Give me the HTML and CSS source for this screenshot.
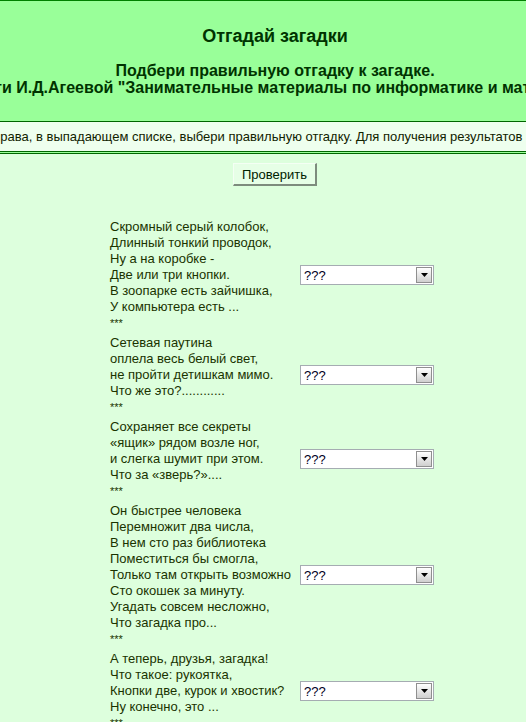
FILE: index.html
```html
<!DOCTYPE html>
<html lang="ru">
<head>
    <meta charset="UTF-8">
    <title>Отгадай загадки</title>
    <link rel="stylesheet" href="styles.css">
</head>
<body>

<div class="page">
    <div class="header">
        <div class="line title">Отгадай загадки</div>
        <div class="line subtitle">Подбери правильную отгадку к загадке.</div>
        <div class="line subtitle">Из книги И.Д.Агеевой "Занимательные материалы по информатике и математике".</div>
    </div>

    <div class="info">
        <div class="line">Прочитай загадку, а справа, в выпадающем списке, выбери правильную отгадку. Для получения результатов нажми кнопку "Проверить"</div>
    </div>
    <div class="rule"></div>

    <div class="content">
        <div class="actions">
            <button class="check-btn" onclick="check()">Проверить</button>
        </div>

        <div class="riddles">
            <div class="riddle">Скромный серый колобок,<br>Длинный тонкий проводок,<br>Ну а на коробке -<br>Две или три кнопки.<br>В зоопарке есть зайчишка,<br>У компьютера есть ...<br><span class="stars">***</span></div>
            <div class="answer">
                <select class="pick" data-ok="мышь">
                    <option>???</option><option>мышь</option><option>интернет</option><option>системный блок</option><option>компьютер</option><option>джойстик</option>
                </select>
                <span class="arrow"><svg width="7" height="4" viewBox="0 0 7 4"><polygon points="0,0 7,0 3.5,4" fill="#000"/></svg></span>
            </div>

            <div class="riddle">Сетевая паутина<br>оплела весь белый свет,<br>не пройти детишкам мимо.<br>Что же это?............<br><span class="stars">***</span></div>
            <div class="answer">
                <select class="pick" data-ok="интернет">
                    <option>???</option><option>мышь</option><option>интернет</option><option>системный блок</option><option>компьютер</option><option>джойстик</option>
                </select>
                <span class="arrow"><svg width="7" height="4" viewBox="0 0 7 4"><polygon points="0,0 7,0 3.5,4" fill="#000"/></svg></span>
            </div>

            <div class="riddle">Сохраняет все секреты<br>«ящик» рядом возле ног,<br>и слегка шумит при этом.<br>Что за «зверь?»....<br><span class="stars">***</span></div>
            <div class="answer">
                <select class="pick" data-ok="системный блок">
                    <option>???</option><option>мышь</option><option>интернет</option><option>системный блок</option><option>компьютер</option><option>джойстик</option>
                </select>
                <span class="arrow"><svg width="7" height="4" viewBox="0 0 7 4"><polygon points="0,0 7,0 3.5,4" fill="#000"/></svg></span>
            </div>

            <div class="riddle">Он быстрее человека<br>Перемножит два числа,<br>В нем сто раз библиотека<br>Поместиться бы смогла,<br>Только там открыть возможно<br>Сто окошек за минуту.<br>Угадать совсем несложно,<br>Что загадка про...<br><span class="stars">***</span></div>
            <div class="answer">
                <select class="pick" data-ok="компьютер">
                    <option>???</option><option>мышь</option><option>интернет</option><option>системный блок</option><option>компьютер</option><option>джойстик</option>
                </select>
                <span class="arrow"><svg width="7" height="4" viewBox="0 0 7 4"><polygon points="0,0 7,0 3.5,4" fill="#000"/></svg></span>
            </div>

            <div class="riddle">А теперь, друзья, загадка!<br>Что такое: рукоятка,<br>Кнопки две, курок и хвостик?<br>Ну конечно, это ...<br><span class="stars">***</span></div>
            <div class="answer">
                <select class="pick" data-ok="джойстик">
                    <option>???</option><option>мышь</option><option>интернет</option><option>системный блок</option><option>компьютер</option><option>джойстик</option>
                </select>
                <span class="arrow"><svg width="7" height="4" viewBox="0 0 7 4"><polygon points="0,0 7,0 3.5,4" fill="#000"/></svg></span>
            </div>
        </div>
    </div>
</div>

<script>
    function check() {
        let picks = document.querySelectorAll(".pick");
        let ok = 0;
        picks.forEach(p => { if (p.value === p.dataset.ok) ok++; });
        alert("Правильных ответов: " + ok + " из " + picks.length);
    }
</script>

</body>
</html>
```

FILE: styles.css
```css
html, body { margin: 0; padding: 0; overflow: hidden; background: #ddffdd; }
body { font-family: "Liberation Sans", Arial, sans-serif; font-size: 13px; color: #1a3300; }
.page { width: 550px; }
.line { display: flex; justify-content: center; white-space: nowrap; }

.header { background: #99ff99; border-top: 1px solid #008000; padding: 25px 0 25px; color: #003300; font-weight: bold; }
.title { font-size: 18px; line-height: 20px; margin-bottom: 16px; }
.subtitle { font-size: 16px; line-height: 17px; }

.info { background: #eeffee; border-top: 1px solid #006600; padding: 7px 0; line-height: 15px; color: #112200; }
.rule { height: 1px; background: #99ff99; border-top: 1px solid #006600; border-bottom: 1px solid #006600; }

.content { padding-top: 9px; }
.actions { display: flex; justify-content: center; }
.check-btn { width: 84px; height: 23px; padding: 0; font-family: "Liberation Sans", Arial, sans-serif; font-size: 13px; color: #002200; background: #e6ffe6; border-top: 1px solid #f4fff4; border-left: 1px solid #f4fff4; border-right: 2px solid #7d8c7d; border-bottom: 2px solid #7d8c7d; cursor: pointer; }

.riddles { width: 330px; margin: 33px auto 0; display: grid; grid-template-columns: 190px 140px; row-gap: 4px; align-items: center; }
.riddle { line-height: 16px; }
.stars { font-size: 11px; }

.answer { position: relative; width: 134px; height: 20px; }
.pick { appearance: none; -webkit-appearance: none; width: 134px; height: 20px; margin: 0; padding: 0 0 0 3px; border: 1px solid #a5acb2; border-radius: 0; background: #fff; color: #000022; font-family: "Liberation Sans", Arial, sans-serif; font-size: 13px; }
.arrow { position: absolute; top: 2px; right: 2px; width: 14px; height: 14px; border: 1px solid #8f8f8f; background: linear-gradient(#ffffff, #cfcfcf); display: flex; align-items: center; justify-content: center; pointer-events: none; }
```
